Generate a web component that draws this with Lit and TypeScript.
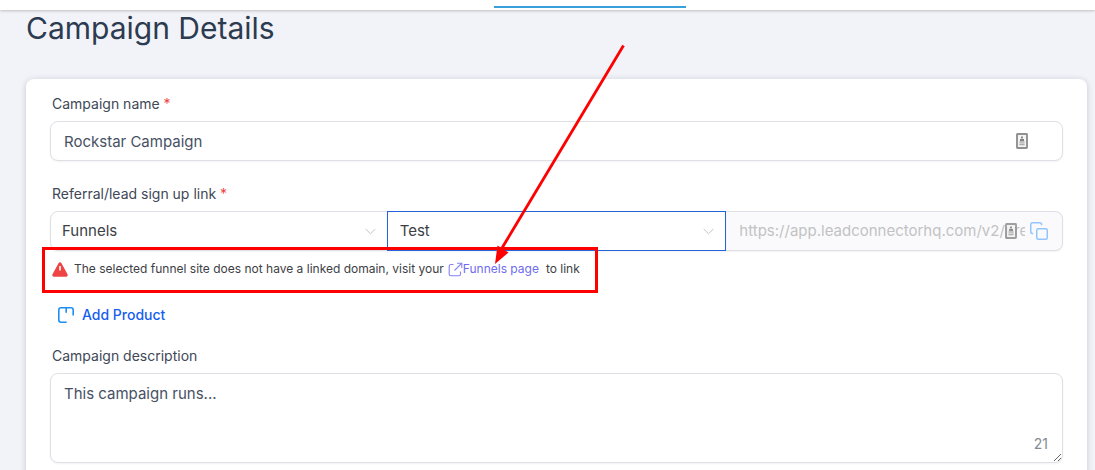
import { LitElement, html, css, svg } from "lit";
import { customElement, property } from "lit/decorators.js";

const chevron = html`<svg class="chevron" width="11" height="7" viewBox="0 0 11 7" aria-hidden="true">
  <path d="M.7 1 5.5 5.8 10.3 1" fill="none" stroke="#c2c2c8" stroke-width="1" />
</svg>`;

const contact = svg`
  <rect x="1" y="1" width="10" height="14" rx=".5" fill="#f4f4f4" stroke="#909090" stroke-width="1.9" />
  <path d="M6 3.400v2M4 7h4" stroke="#808080" stroke-width="1.800" fill="none" />
  <path d="M3.4 9h5.2M3.4 11.400h5.2" stroke="#adadad" stroke-width="1.6" fill="none" />`;

@customElement("app-root")
export class AppRoot extends LitElement {
  @property() name = "Rockstar Campaign";
  @property() description = "This campaign runs...";

  static styles = css`
    :host {
      display: block;
      height: 100vh;
      overflow: hidden;
      position: relative;
      background: #f2f3f8;
      color: #404856;
      font: 14px/20px Inter, sans-serif;
    }
    * { box-sizing: border-box; }
    svg { display: block; flex: none; }
    .topbar {
      height: 10px;
      padding-top: 6px;
      background: #fff;
      box-shadow: 0 1px 3px rgba(0, 0, 0, 0.22);
    }
    .tab {
      width: 192px;
      height: 2px;
      margin-left: 494px;
      background: #38a0db;
    }
    h1 {
      margin: 0 26px 33px;
      font-size: 30px;
      line-height: 36px;
      font-weight: 400;
      color: #2c3b50;
    }
    .card {
      display: flex;
      flex-direction: column;
      margin: 0 8px 0 26px;
      padding: 15px 24px 24px;
      background: #fff;
      border-radius: 8px;
      box-shadow: 0 1px 6px rgba(30, 40, 70, 0.2);
    }
    .label { display: block; margin: 0 2px 7px; }
    .required { color: #ef4444; }
    .box { position: relative; }
    input, select, textarea {
      display: block;
      width: 100%;
      height: 40px;
      margin: 0;
      padding: 0 13px;
      border: 1px solid #dfe0e6;
      border-radius: 8px;
      outline: 0;
      background: #fff;
      color: #475164;
      font: 15px/22px Inter, sans-serif;
      box-shadow: 0 1px 2px rgba(16, 24, 40, 0.05);
    }
    .contact { position: absolute; top: 12px; right: 35px; }
    .links {
      display: grid;
      grid-template-columns: 1fr 1fr 1fr;
    }
    .links > * { min-width: 0; }
    .field + .field { margin-top: 23px; }
    select {
      appearance: none;
      padding: 0 11px;
      color: #3d4045;
      border-radius: 8px 0 0 8px;
    }
    .linked { margin: 0 -1px; z-index: 1; }
    .linked select { border-color: #2463d8; border-radius: 0; padding: 0 12px; }
    .chevron { position: absolute; right: 12px; top: 17px; }
    .url {
      display: flex;
      align-items: center;
      height: 40px;
      padding: 0 14px;
      border: 1px solid #dfe0e6;
      border-left: 0;
      border-radius: 0 8px 8px 0;
      background: #fafafc;
      box-shadow: 0 1px 2px rgba(16, 24, 40, 0.05);
    }
    .url input {
      flex: 1;
      min-width: 0;
      height: 22px;
      padding: 0;
      border: 0;
      border-radius: 0;
      box-shadow: none;
      background: none;
      color: #c2c2c4;
    }
    .url .contact { right: 45px; top: 11px; }
    button {
      display: flex;
      align-items: center;
      padding: 0;
      border: 0;
      background: none;
      font: inherit;
    }
    .copy { margin-left: 5px; }
    .notice {
      position: relative;
      display: flex;
      align-items: center;
      align-self: flex-start;
      margin: 8px 0 26px 2px;
      font-size: 12px;
      color: #3d4045;
    }
    .notice p { display: flex; align-items: center; margin: 0 0 0 6px; }
    .notice a {
      display: flex;
      align-items: center;
      margin: 0 7px 0 4px;
      color: #6e6cf0;
      text-decoration: none;
    }
    .frame {
      position: absolute;
      inset: -12px -18px -14px -10px;
      border: 3px solid #fe0000;
      pointer-events: none;
      z-index: 2;
    }
    .add {
      align-self: flex-start;
      gap: 8px;
      margin: 0 0 21px 8px;
      color: #155eef;
      font-weight: 500;
    }
    textarea { height: 90px; padding: 9px 13px; resize: vertical; }
    .count {
      position: absolute;
      right: 15px;
      bottom: 9px;
      color: #858b93;
    }
    .arrow { position: absolute; left: 490px; top: 40px; z-index: 3; pointer-events: none; }
  `;

  render() {
    return html`
      <div class="topbar"><div class="tab"></div></div>
      <h1>Campaign Details</h1>
      <form class="card">
        <div class="field">
          <label class="label" for="name">Campaign name <span class="required">*</span></label>
          <div class="box">
            <input id="name" .value=${this.name} />
            <svg class="contact" width="12" height="16" viewBox="0 0 12 16" aria-hidden="true">${contact}</svg>
          </div>
        </div>
        <div class="field">
          <label class="label" for="kind">Referral/lead sign up link <span class="required">*</span></label>
          <div class="links">
            <div class="box"><select id="kind"><option>Funnels</option></select>${chevron}</div>
            <div class="box linked"><select aria-label="Funnel site"><option>Test</option></select>${chevron}</div>
            <div class="box url">
              <input aria-label="Sign up URL" readonly value="https://app.leadconnectorhq.com/v2/preview/" />
              <svg class="contact" width="12" height="16" viewBox="0 0 12 16" opacity=".85" aria-hidden="true">${contact}</svg>
              <button class="copy" type="button" aria-label="Copy link">
                <svg width="18" height="18" viewBox="0 0 18 18" fill="none" stroke="#93c5fd" stroke-width="1.5">
                  <rect x="6.75" y="6.75" width="10.5" height="10.5" rx="1.5" />
                  <path d="M3.2 11.5H2.5A1.75 1.75 0 0 1 .75 9.75V2.5A1.75 1.75 0 0 1 2.5.75h7.25A1.75 1.75 0 0 1 11.5 2.5v.8" />
                </svg>
              </button>
            </div>
          </div>
        </div>
        <div class="notice">
          <svg width="16" height="15" viewBox="0 0 16 15" aria-hidden="true">
            <path d="M6.5 1.2a1.7 1.7 0 0 1 3 0l6 11.1a1.6 1.6 0 0 1-1.4 2.4H1.9A1.6 1.6 0 0 1 .5 12.3Z" fill="#ef4444" />
            <path d="M8 4v4.5" stroke="#fff" stroke-width="1.6" />
          </svg>
          <p>
            The selected funnel site does not have a linked domain, visit your
            <a href="#funnels">
              <svg width="15" height="15" viewBox="0 0 15 15" fill="none" stroke="#8583f3" stroke-width="1.1" aria-hidden="true">
                <path d="M5.5 2.5H3A1.8 1.8 0 0 0 1.2 4.3V12A1.8 1.8 0 0 0 3 13.8h7.7a1.8 1.8 0 0 0 1.8-1.8V9.5M9 1.2h4.8V6M13.8 1.2 6.5 8.5" />
              </svg>Funnels page</a>
            to link
          </p>
          <div class="frame"></div>
        </div>
        <button class="add" type="button">
          <svg width="16" height="16" viewBox="0 0 16 16" fill="none" stroke="#1c8ef5" stroke-width="1.6" aria-hidden="true">
            <path d="M8.7 15.2H3A2.2 2.2 0 0 1 .8 13V3A2.2 2.2 0 0 1 3 .8h10A2.2 2.2 0 0 1 15.2 3v5.5M8.2.8v5" />
          </svg>
          Add Product
        </button>
        <div class="field">
          <label class="label" for="description">Campaign description</label>
          <div class="box">
            <textarea id="description" .value=${this.description}></textarea>
            <span class="count">${this.description.length}</span>
          </div>
        </div>
      </form>
      <svg class="arrow" width="140" height="230" viewBox="0 0 140 230" aria-hidden="true">
        <path d="M133.5 5.5 12 208" stroke="#fe0000" stroke-width="2.8" />
        <path d="M5 224 7.5 205.5 18.5 212.5Z" fill="#fe0000" />
      </svg>
    `;
  }
}
